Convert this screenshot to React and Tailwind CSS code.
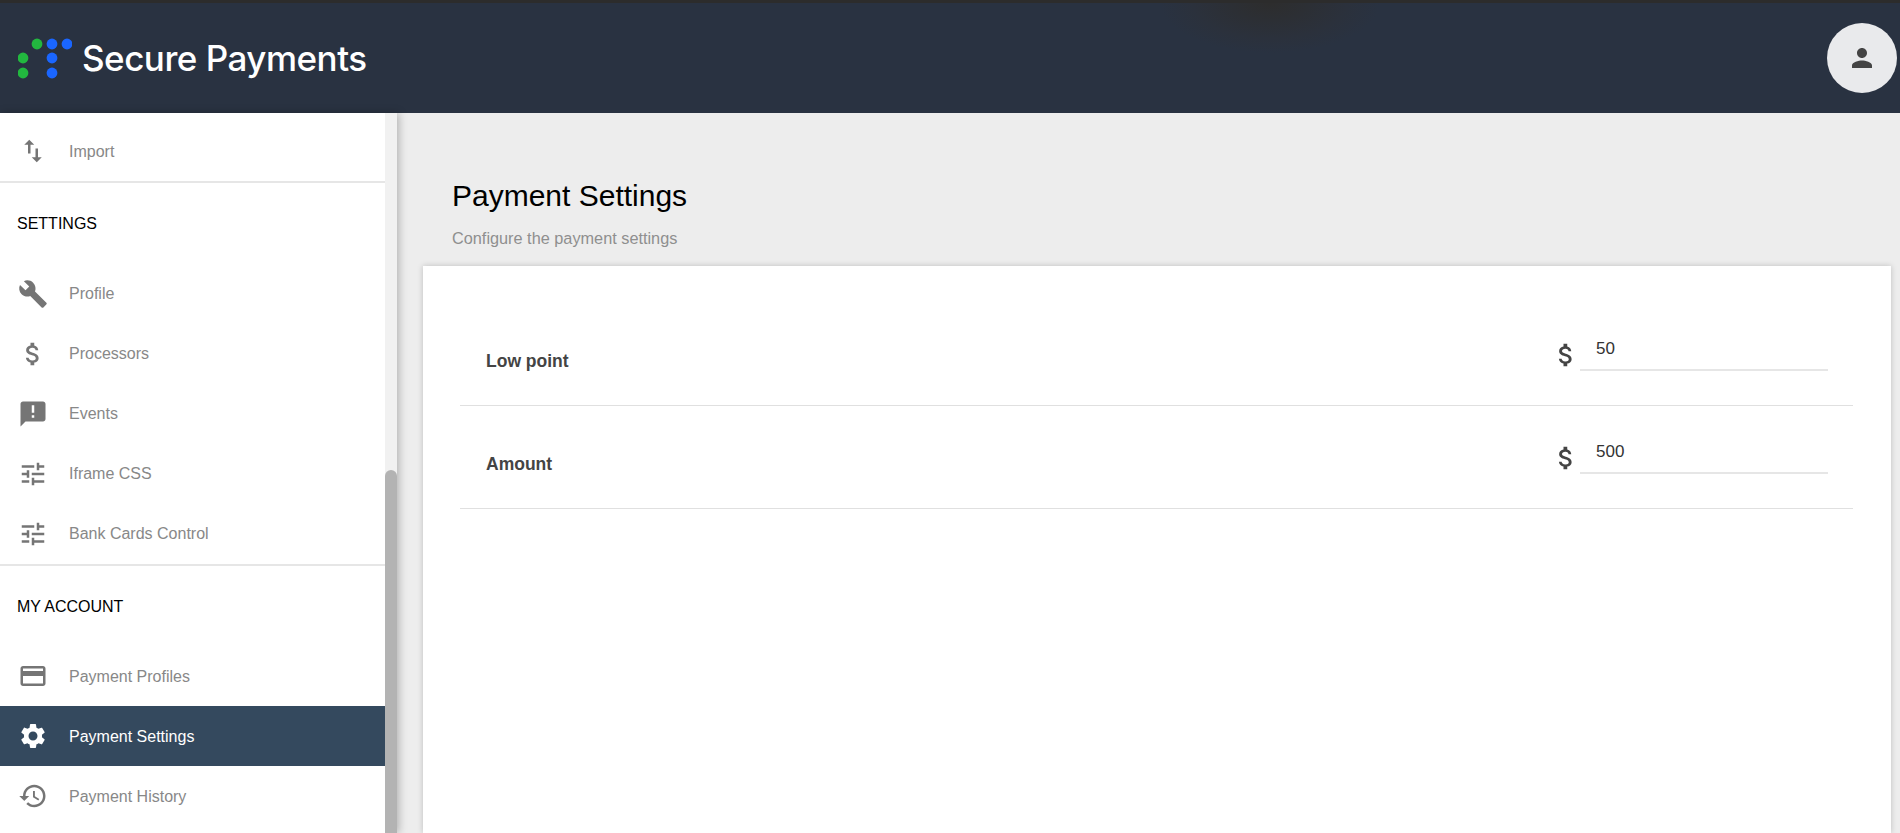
const paths = {
  importExport: 'M9 3L5 6.99h3V14h2V6.99h3L9 3zm7 14.01V10h-2v7.01h-3L15 21l4-3.99h-3z',
  build: 'M22.7 19l-9.1-9.1c.9-2.3.4-5-1.5-6.9-2-2-5-2.4-7.4-1.3L9 6 6 9 1.6 4.7C.4 7.1.9 10.1 2.9 12.1c1.9 1.9 4.6 2.4 6.9 1.5l9.1 9.1c.4.4 1 .4 1.4 0l2.3-2.3c.5-.4.5-1.1.1-1.4z',
  money: 'M11.8 10.9c-2.27-.59-3-1.2-3-2.15 0-1.09 1.01-1.85 2.7-1.85 1.78 0 2.44.85 2.5 2.1h2.21c-.07-1.72-1.12-3.3-3.21-3.81V3h-3v2.16c-1.94.42-3.5 1.68-3.5 3.61 0 2.31 1.91 3.46 4.7 4.13 2.5.6 3 1.48 3 2.41 0 .69-.49 1.79-2.7 1.79-2.06 0-2.87-.92-2.98-2.1h-2.2c.12 2.19 1.76 3.42 3.68 3.83V21h3v-2.15c1.95-.37 3.5-1.5 3.5-3.55 0-2.84-2.43-3.81-4.7-4.4z',
  announcement: 'M20 2H4c-1.1 0-1.99.9-1.99 2L2 22l4-4h14c1.1 0 2-.9 2-2V4c0-1.1-.9-2-2-2zm-7 9h-2V5h2v6zm0 4h-2v-2h2v2z',
  tune: 'M3 17v2h6v-2H3zM3 5v2h10V5H3zm10 16v-2h8v-2h-8v-2h-2v6h2zM7 9v2H3v2h4v2h2V9H7zm14 4v-2H11v2h10zm-6-4h2V7h4V5h-4V3h-2v6z',
  card: 'M20 4H4c-1.11 0-1.99.89-1.99 2L2 18c0 1.11.89 2 2 2h16c1.11 0 2-.89 2-2V6c0-1.11-.89-2-2-2zm0 14H4v-6h16v6zm0-10H4V6h16v2z',
  settings: 'M19.14 12.94c.04-.3.06-.61.06-.94 0-.32-.02-.64-.07-.94l2.03-1.58c.18-.14.23-.41.12-.61l-1.92-3.32c-.12-.22-.37-.29-.59-.22l-2.39.96c-.5-.38-1.03-.7-1.62-.94l-.36-2.54c-.04-.24-.24-.41-.48-.41h-3.84c-.24 0-.43.17-.47.41l-.36 2.54c-.59.24-1.13.57-1.62.94l-2.39-.96c-.22-.08-.47 0-.59.22L2.74 8.87c-.12.21-.08.47.12.61l2.03 1.58c-.05.3-.09.63-.09.94s.02.64.07.94l-2.03 1.58c-.18.14-.23.41-.12.61l1.92 3.32c.12.22.37.29.59.22l2.39-.96c.5.38 1.03.7 1.62.94l.36 2.54c.05.24.24.41.48.41h3.84c.24 0 .44-.17.47-.41l.36-2.54c.59-.24 1.13-.56 1.62-.94l2.39.96c.22.08.47 0 .59-.22l1.92-3.32c.12-.22.07-.47-.12-.61l-2.01-1.58zM12 15.6c-1.98 0-3.6-1.62-3.6-3.6s1.62-3.6 3.6-3.6 3.6 1.62 3.6 3.6-1.62 3.6-3.6 3.6z',
  history: 'M13 3c-4.97 0-9 4.03-9 9H1l3.89 3.89.07.14L9 12H6c0-3.87 3.13-7 7-7s7 3.13 7 7-3.13 7-7 7c-1.93 0-3.68-.79-4.94-2.06l-1.42 1.42C8.27 19.99 10.51 21 13 21c4.97 0 9-4.03 9-9s-4.03-9-9-9zm-1 5v5l4.28 2.54.72-1.21-3.5-2.08V8h-1.5z',
  person: 'M12 12c2.21 0 4-1.79 4-4s-1.79-4-4-4-4 1.79-4 4 1.79 4 4 4zm0 2c-2.67 0-8 1.34-8 4v2h16v-2c0-2.66-5.33-4-8-4z',
};

function Icon({ d, className = '' }) {
  return (
    <svg viewBox="0 0 24 24" className={`w-[30px] h-[30px] shrink-0 fill-current ${className}`}>
      <path d={d} />
    </svg>
  );
}

function Logo() {
  const dots = [
    [37, 8, '#22b83f'], [23, 22, '#22b83f'], [23, 37, '#22b83f'],
    [52, 8, '#1a66ff'], [67, 8, '#1a66ff'], [52, 22, '#1a66ff'], [52, 37, '#1a66ff'],
  ];
  return (
    <svg viewBox="18 0 54 45" className="w-[54px] h-[45px] shrink-0">
      {dots.map(([cx, cy, fill]) => (
        <circle key={`${cx}-${cy}`} cx={cx} cy={cy} r="5.4" fill={fill} />
      ))}
    </svg>
  );
}

function NavItem({ icon, label, active, textClass = 'mt-[1px]' }) {
  return (
    <div className={`flex items-center h-[60px] pl-[18px] gap-[21px] text-[16px] ${active ? 'bg-[#34495e] text-white' : 'text-[#888888]'}`}>
      <Icon d={icon} className={active ? 'text-white' : 'text-[#757575]'} />
      <span className={textClass}>{label}</span>
    </div>
  );
}

function SectionTitle({ children }) {
  return <div className="h-[112px] pt-[31px] pl-[17px] text-[16px] leading-[20px] text-black">{children}</div>;
}

function AmountRow({ label, value }) {
  return (
    <div className="flex items-start justify-between h-[103px] border-b border-[#e0e0e0] pl-[26px] pr-[25px]">
      <span className="mt-[46px] text-[17.5px] leading-[24px] font-bold text-[#444444]">{label}</span>
      <div className="flex items-start">
        <Icon d={paths.money} className="mt-[37px] translate-x-[1px] text-[#444444]" />
        <div className="w-[248px] h-[45px] mt-[23px] pl-[16px] pt-[11px] border-b-2 border-[#e6e6e6] text-[17px] leading-[24px] text-[#333333]">
          {value}
        </div>
      </div>
    </div>
  );
}

export default function App() {
  return (
    <div className="h-[833px] w-[1900px] overflow-hidden flex flex-col bg-[#ededed] font-['Liberation_Sans',Arial,sans-serif]">
      <header className="h-[113px] shrink-0 flex items-center justify-between border-t-[3px] border-[#2c2c2c] bg-[#293241] bg-[radial-gradient(ellipse_110px_50px_at_1270px_0px,#2d2d2d_0%,#2b313c_70%,#293241_100%)] pl-[18px] pr-[3px]">
        <div className="flex items-center gap-[10px]">
          <Logo />
          <span className="text-[35px] font-medium tracking-[-0.5px] text-white font-['Inter',sans-serif]">Secure Payments</span>
        </div>
        <button className="w-[70px] h-[70px] rounded-full bg-[#e9eaec] flex items-center justify-center text-[#444444]">
          <Icon d={paths.person} />
        </button>
      </header>

      <div className="flex-1 flex min-h-0">
        <aside className="w-[397px] shrink-0 flex bg-white shadow-[2px_0_8px_rgba(0,0,0,0.25)] z-10">
          <nav className="w-[385px] shrink-0">
            <div className="h-[70px] border-b-2 border-[#e6e6e6] pt-[8px]">
              <NavItem icon={paths.importExport} label="Import" />
            </div>
            <SectionTitle>SETTINGS</SectionTitle>
            <div className="border-b-2 border-[#e6e6e6] mt-[-31px]">
              <NavItem icon={paths.build} label="Profile" textClass="" />
              <NavItem icon={paths.money} label="Processors" textClass="" />
              <NavItem icon={paths.announcement} label="Events" textClass="" />
              <NavItem icon={paths.tune} label="Iframe CSS" textClass="" />
              <NavItem icon={paths.tune} label="Bank Cards Control" textClass="" />
            </div>
            <SectionTitle>MY ACCOUNT</SectionTitle>
            <div className="mt-[-32px]">
              <NavItem icon={paths.card} label="Payment Profiles" />
              <NavItem icon={paths.settings} label="Payment Settings" active />
              <NavItem icon={paths.history} label="Payment History" />
            </div>
          </nav>
          <div className="w-[12px] bg-[#f1f1f1] flex flex-col">
            <div className="h-[357px] shrink-0" />
            <div className="flex-1 bg-[#b3b3b3] rounded-t-[6px]" />
          </div>
        </aside>

        <main className="flex-1 min-w-0 pl-[26px] pr-[9px] pt-[66px] flex flex-col">
          <div className="pl-[29px]">
            <h1 className="text-[30px] leading-[34px] text-black">Payment Settings</h1>
            <p className="mt-[16px] text-[16.3px] leading-[18px] text-[#8f8f8f]">Configure the payment settings</p>
          </div>
          <section className="mt-[19px] flex-1 bg-white shadow-[0_0_6px_rgba(0,0,0,0.2)] pt-[37px] pl-[37px] pr-[38px]">
            <AmountRow label="Low point" value="50" />
            <AmountRow label="Amount" value="500" />
          </section>
        </main>
      </div>
    </div>
  );
}
